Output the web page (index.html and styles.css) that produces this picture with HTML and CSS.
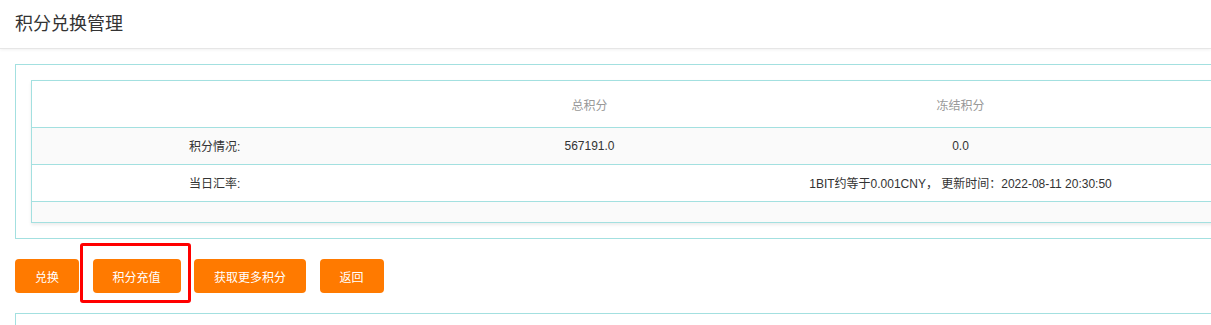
FILE: index.html
```html
<!DOCTYPE html>
<html lang="zh-CN">
<head>
  <meta charset="UTF-8" />
  <meta name="viewport" content="width=device-width, initial-scale=1.0" />
  <title>积分兑换管理</title>
  <link rel="stylesheet" href="styles.css">
</head>
<body>
  <div class="header">积分兑换管理</div>
  <div class="panel">
    <table class="info">
      <colgroup>
        <col class="c1"><col class="c2"><col class="c3"><col>
      </colgroup>
      <thead>
        <tr><th></th><th>总积分</th><th>冻结积分</th><th></th></tr>
      </thead>
      <tbody>
        <tr class="odd"><td>积分情况:</td><td>567191.0</td><td>0.0</td><td></td></tr>
        <tr><td>当日汇率:</td><td></td><td>1BIT约等于0.001CNY， 更新时间：2022-08-11 20:30:50</td><td></td></tr>
        <tr class="odd empty"><td></td><td></td><td></td><td></td></tr>
      </tbody>
    </table>
  </div>
  <div class="actions">
    <button class="btn">兑换</button>
    <button class="btn marked">积分充值</button>
    <button class="btn">获取更多积分</button>
    <button class="btn">返回</button>
  </div>
  <div class="panel bottom"></div>
</body>
</html>
```

FILE: styles.css
```css
body {
  margin: 0;
  font-family: "Liberation Sans", "Noto Sans CJK SC", sans-serif;
  font-size: 12px;
  color: #333;
  background: #fff;
  overflow: hidden;
}
.header {
  height: 48px;
  line-height: 48px;
  padding-left: 15px;
  font-size: 18px;
  color: #333;
  border-bottom: 1px solid #e6e6e6;
  box-shadow: 0 1px 3px rgba(0, 0, 0, 0.06);
}
.panel {
  margin: 15px 0 0 15px;
  width: 1400px;
  border: 1px solid #a3e0e0;
  padding: 15px;
}
.info {
  width: 1300px;
  border-collapse: collapse;
  border: 1px solid #a3e0e0;
  box-shadow: 0 2px 3px rgba(0, 0, 0, 0.08);
}
.info .c1 { width: 366px; }
.info .c2 { width: 384px; }
.info .c3 { width: 358px; }
.info th {
  height: 46px;
  padding: 0;
  font-weight: normal;
  color: #999;
  text-align: center;
  border-bottom: 1px solid #a3e0e0;
}
.info td {
  height: 35px;
  padding: 0 0 1px;
  text-align: center;
  white-space: nowrap;
  border-bottom: 1px solid #a3e0e0;
}
.info tr.odd td { background: #fafafa; }
.info tr.empty td { height: 20px; padding: 0; }
.actions {
  display: flex;
  gap: 13.5px;
  margin: 20px 0 0 15px;
}
.btn {
  position: relative;
  height: 34px;
  padding: 0 20px;
  border: none;
  border-radius: 4px;
  background: #ff7a00;
  color: #fff;
  font-family: inherit;
  font-size: 12px;
}
.marked::after {
  content: "";
  position: absolute;
  left: -13px;
  top: -16px;
  right: -10px;
  bottom: -10px;
  border: 3px solid #ff0000;
  border-radius: 3px;
}
.bottom {
  margin-top: 20px;
  height: 40px;
}
```
